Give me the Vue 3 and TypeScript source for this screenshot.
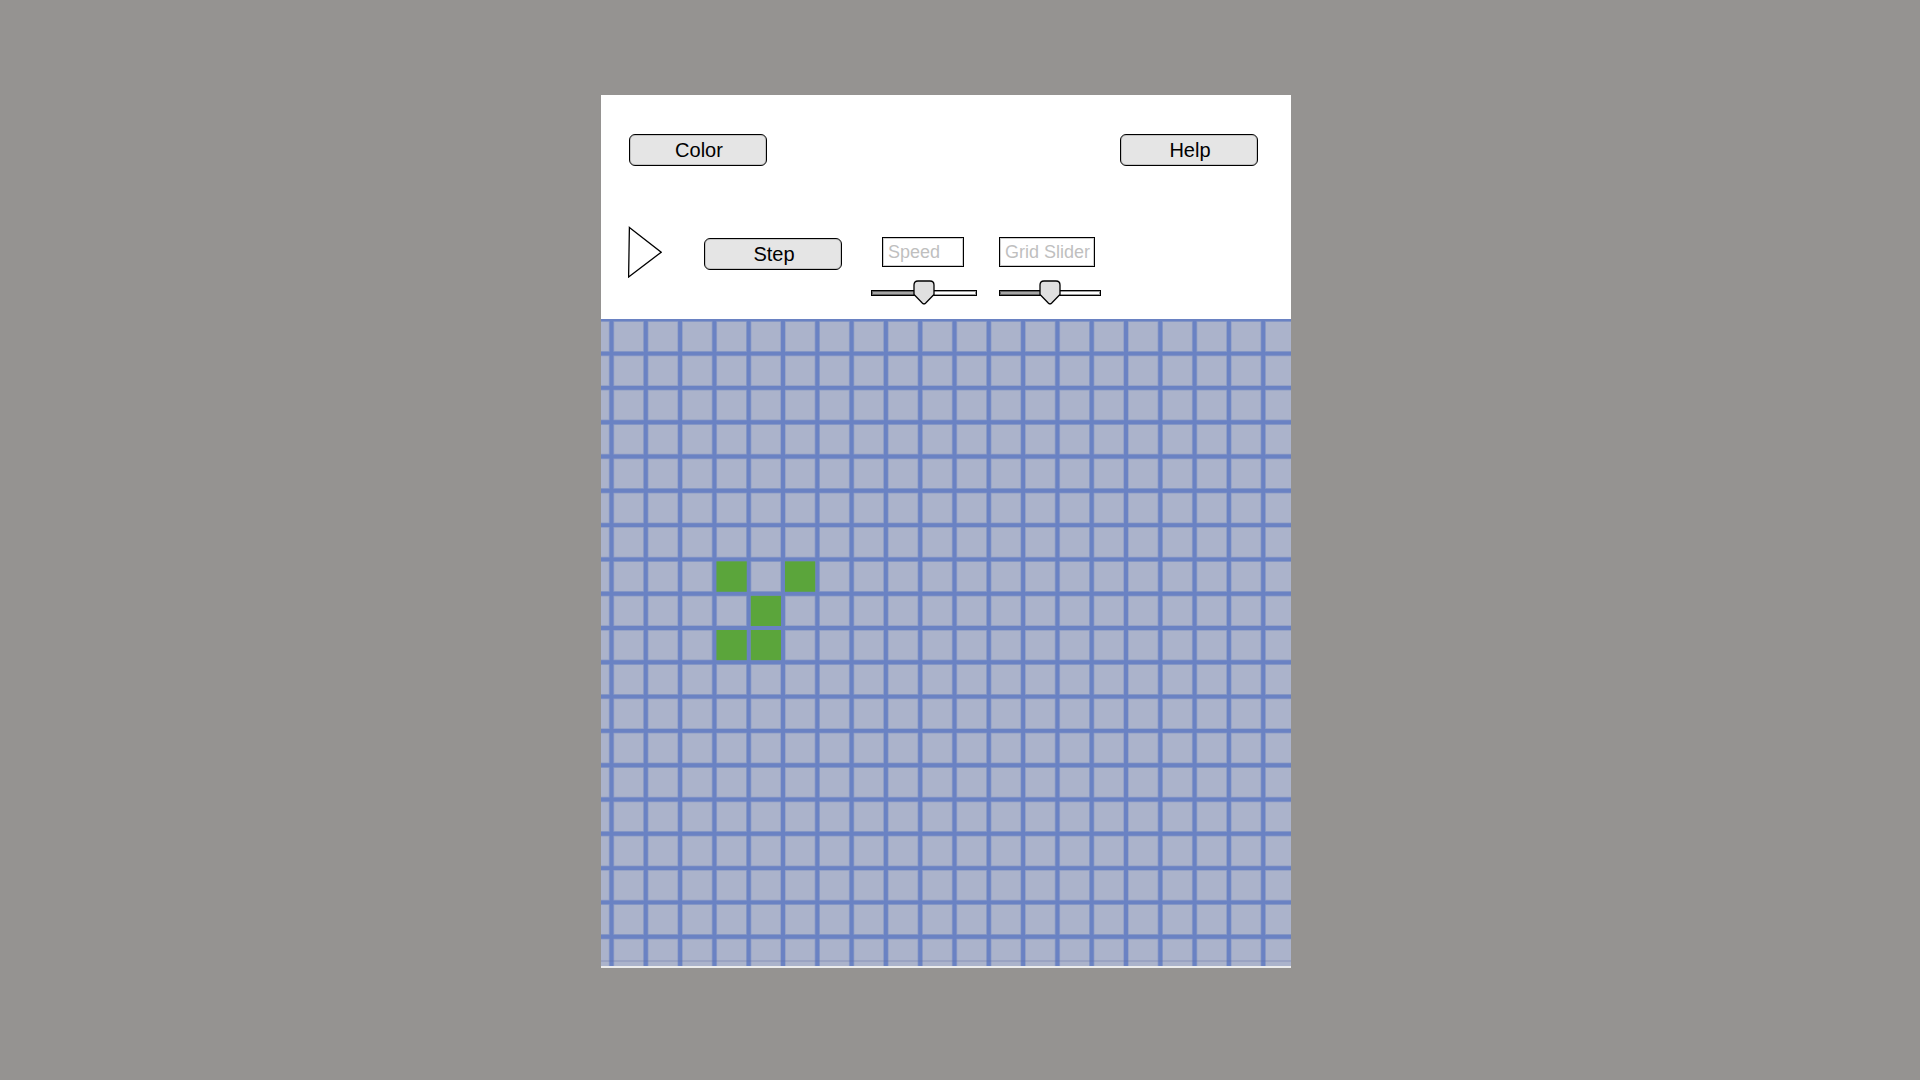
<script setup lang="ts">
import { ref } from 'vue'

interface Cell {
  col: number
  row: number
}

const PITCH = 34.3
const OFFSET_X = 10.5
const OFFSET_Y = 0.3
const WIDTH = 690
const HEIGHT = 647

const columns = Array.from({ length: 20 }, (_, i) => OFFSET_X + i * PITCH)
const rows = Array.from({ length: 19 }, (_, i) => OFFSET_Y + i * PITCH)

const liveCells = ref<Cell[]>([
  { col: 3, row: 7 },
  { col: 5, row: 7 },
  { col: 4, row: 8 },
  { col: 3, row: 9 },
  { col: 4, row: 9 },
])

const speedLabel = ref('')
const gridLabel = ref('')
const speed = ref(50)
const gridSize = ref(50)
</script>

<template>
  <div class="page">
    <main class="panel">
      <header class="toolbar">
        <div class="menu">
          <button type="button" class="btn">Color</button>
          <button type="button" class="btn">Help</button>
        </div>
        <div class="controls">
          <button type="button" class="play" aria-label="Play">
            <svg viewBox="0 0 34 52" width="34" height="52" aria-hidden="true">
              <path d="M1.4 1.4 L33.2 26.2 L0.6 51 Z" fill="#fff" stroke="#000" stroke-width="1.3" />
            </svg>
          </button>
          <button type="button" class="btn step">Step</button>
          <input v-model="speedLabel" class="field speed-field" type="text" placeholder="Speed" aria-label="Speed" />
          <input v-model="gridLabel" class="field grid-field" type="text" placeholder="Grid Slider" aria-label="Grid Slider" />
          <input v-model.number="speed" class="slider speed-slider" type="range" min="0" max="100" aria-label="Speed value" />
          <input v-model.number="gridSize" class="slider grid-slider" type="range" min="0" max="100" aria-label="Grid size" />
        </div>
      </header>
      <svg class="board" :viewBox="`0 0 ${WIDTH} ${HEIGHT}`" role="img" aria-label="Cell grid">
        <rect :width="WIDTH" :height="HEIGHT" fill="#abb3cb" />
        <g stroke="#8e9dc6" stroke-width="5.4">
          <line v-for="x in columns" :key="`ex${x}`" :x1="x" :x2="x" y1="0" :y2="HEIGHT" />
          <line v-for="y in rows" :key="`ey${y}`" :y1="y" :y2="y" x1="0" :x2="WIDTH" />
        </g>
        <rect
          v-for="c in liveCells"
          :key="`${c.col}-${c.row}`"
          :x="OFFSET_X + c.col * PITCH + 1.7"
          :y="OFFSET_Y + c.row * PITCH + 1.7"
          :width="PITCH - 3.4"
          :height="PITCH - 3.4"
          fill="#5ba53b"
        />
        <g stroke="#6a82c3" stroke-width="3.9">
          <line v-for="x in columns" :key="`x${x}`" :x1="x" :x2="x" y1="0" :y2="HEIGHT" />
          <line v-for="y in rows" :key="`y${y}`" :y1="y" :y2="y" x1="0" :x2="WIDTH" />
        </g>
        <rect y="641" :width="WIDTH" height="2" fill="#5f6fa6" opacity="0.22" />
      </svg>
    </main>
  </div>
</template>

<style>
body {
  margin: 0;
  background: #959391;
}
</style>

<style scoped>
.page {
  display: grid;
  grid-template-columns: 601fr 690fr 629fr;
  min-height: 100vh;
  box-sizing: border-box;
  padding: 95px 0;
  align-items: start;
  background: #959391;
  font-family: "Liberation Sans", Arial, sans-serif;
}

.panel {
  grid-column: 2;
  background: #fff;
}

.toolbar {
  padding: 39px 33px 14px 28px;
}

.menu {
  display: flex;
  justify-content: space-between;
}

.btn {
  width: 138px;
  height: 32px;
  padding: 0 0 0 2px;
  border: 1px solid #000;
  border-radius: 6px;
  background: #e5e5e5;
  box-shadow: inset 0 0 0 1px rgba(0, 0, 0, 0.15);
  color: #000;
  font: 20px/30px "Liberation Sans", Arial, sans-serif;
}

.controls {
  display: grid;
  grid-template-columns: 75px 168px 128px 102px;
  grid-template-rows: 52px 24px;
  row-gap: 3px;
  align-items: center;
  margin-top: 60px;
  margin-left: -1px;
}

.step {
  margin-top: 4px;
  margin-left: 1px;
}

.play {
  width: 34px;
  height: 52px;
  padding: 0;
  border: 0;
  background: none;
}

.play svg {
  display: block;
}

.field {
  box-sizing: border-box;
  height: 30px;
  padding: 1px 0 0 5px;
  border: 1px solid #000;
  border-radius: 0;
  background: #fff;
  box-shadow: inset 0 0 0 1px rgba(0, 0, 0, 0.2);
  color: #000;
  font: 18px/27px "Liberation Sans", Arial, sans-serif;
}

.field::placeholder {
  color: #bfbfbf;
  opacity: 1;
}

.speed-field {
  width: 82px;
  margin-left: 11px;
}

.grid-field {
  width: 96px;
}

.slider {
  appearance: none;
  height: 24px;
  margin: 0;
  background: none;
}

.speed-slider {
  grid-column: 3;
  width: 106px;
}

.grid-slider {
  grid-column: 4;
  width: 102px;
}

.slider::-webkit-slider-runnable-track {
  box-sizing: border-box;
  height: 6px;
  border: 1px solid #000;
  background: linear-gradient(to right, #a6a6a6 50%, #fff 50%);
  box-shadow: inset 0 0 0 1px rgba(0, 0, 0, 0.4);
}

.slider::-webkit-slider-thumb {
  appearance: none;
  width: 22px;
  height: 25px;
  margin-top: -11px;
  border: 0;
  background: url("data:image/svg+xml,%3Csvg xmlns='http://www.w3.org/2000/svg' viewBox='0 0 22 25'%3E%3Cpath d='M5 1H17Q21 1 21 5V14.5L12.5 23.2Q11 24.6 9.5 23.2L1 14.5V5Q1 1 5 1Z' fill='%23e0e0e0' stroke='%23000' stroke-width='1.3'/%3E%3C/svg%3E") no-repeat;
}

.board {
  display: block;
  width: 100%;
  border-bottom: 2px solid #ececec;
}
</style>
